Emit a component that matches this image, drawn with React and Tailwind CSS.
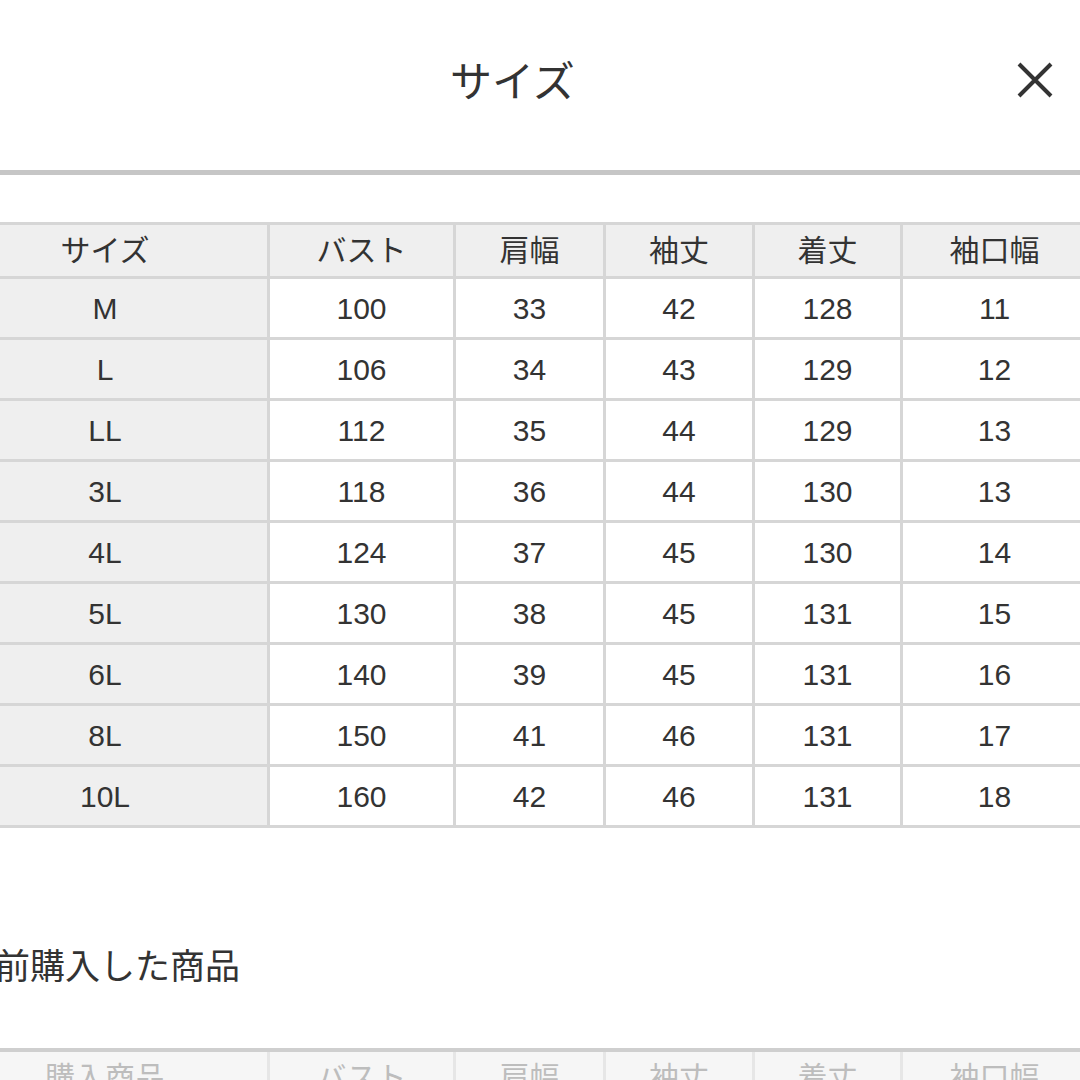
import React from "react";

const headers = ["サイズ", "バスト", "肩幅", "袖丈", "着丈", "袖口幅"];
const rows = [
  ["M", "100", "33", "42", "128", "11"],
  ["L", "106", "34", "43", "129", "12"],
  ["LL", "112", "35", "44", "129", "13"],
  ["3L", "118", "36", "44", "130", "13"],
  ["4L", "124", "37", "45", "130", "14"],
  ["5L", "130", "38", "45", "131", "15"],
  ["6L", "140", "39", "45", "131", "16"],
  ["8L", "150", "41", "46", "131", "17"],
  ["10L", "160", "42", "46", "131", "18"],
];
const bottomHeaders = ["購入商品", "バスト", "肩幅", "袖丈", "着丈", "袖口幅"];

export default function App() {
  return (
    <div className="w-[1080px] h-[1080px] overflow-hidden bg-white text-[#333333] font-['Liberation_Sans','Noto_Sans_CJK_JP',sans-serif]">
      {/* header */}
      <div className="h-[170px] flex items-start">
        <div className="ml-[450px] mt-[62px] text-[42px] leading-none">サイズ</div>
        <div className="ml-auto mr-[26px] mt-[61px] w-[38px] h-[38px] flex items-center justify-center">
          <svg width="38" height="38" viewBox="0 0 38 38">
            <path d="M3 3 L35 35 M35 3 L3 35" stroke="#333333" strokeWidth="4" strokeLinecap="butt" />
          </svg>
        </div>
      </div>
      <div className="h-[5px] bg-[#c6c6c6]" />

      {/* size table */}
      <div className="mt-[47px] ml-[-60px] w-[1160px] grid grid-cols-[324px_183px_147px_146px_145px_183px] gap-[3px] p-[3px] bg-[#d6d6d6] text-[30px]">
        {headers.map((h, i) => (
          <div key={"h" + i} className="h-[51px] bg-[#efefef] flex items-center justify-center">
            {h}
          </div>
        ))}
        {rows.map((r, ri) =>
          r.map((c, ci) => (
            <div
              key={ri + "-" + ci}
              className={
                "h-[58px] flex items-center justify-center " +
                (ci === 0 ? "bg-[#efefef]" : "bg-white")
              }
            >
              {c}
            </div>
          ))
        )}
      </div>

      {/* previous purchases */}
      <div className="mt-[115px] ml-[-40px] text-[35px] leading-[48px] whitespace-nowrap">以前購入した商品</div>

      <div className="mt-[57px] ml-[-60px] w-[1160px] border-t-[4px] border-[#cfcfcf] grid grid-cols-[324px_183px_147px_146px_145px_183px] gap-[3px] px-[3px] bg-[#e6e6e6] text-[30px] text-[#bdbdbd]">
        {bottomHeaders.map((h, i) => (
          <div key={"b" + i} className="h-[51px] bg-[#f6f6f6] flex items-center justify-center">
            {h}
          </div>
        ))}
      </div>
    </div>
  );
}
